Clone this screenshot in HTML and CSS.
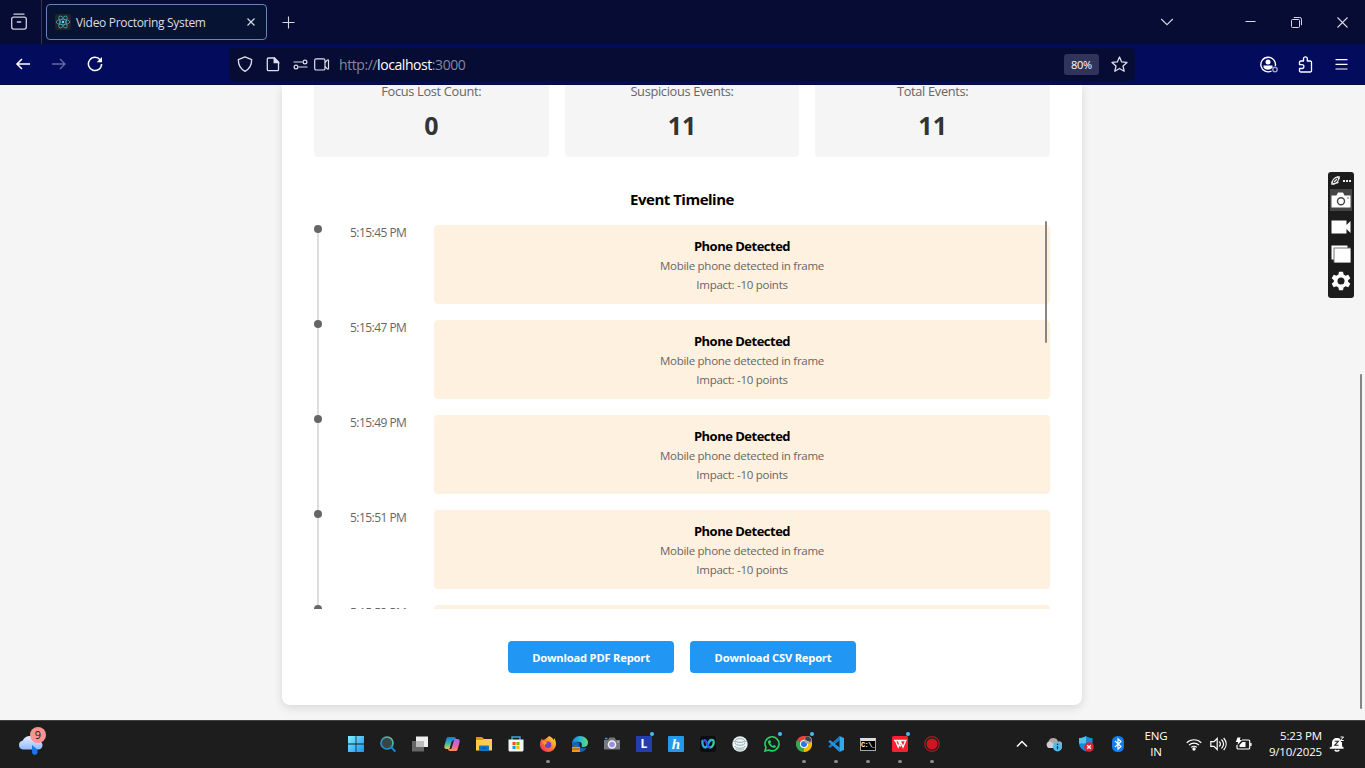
FILE: index.html
```html
<!DOCTYPE html>
<html lang="en">
<head>
<meta charset="utf-8">
<title>Video Proctoring System</title>
<link rel="stylesheet" href="styles.css">
</head>
<body>
<div class="screen">
  <header class="tabbar">
    <div class="tabs-view">
      <svg width="18" height="18" viewBox="0 0 18 18" fill="none" stroke="#cfd0dc" stroke-width="1.3" stroke-linecap="round"><path d="M4 1.2h10"/><rect x="1.7" y="4.1" width="14.6" height="12" rx="2"/><path d="M7.3 9h3.4"/></svg>
    </div>
    <div class="tab">
      <svg class="favicon" width="16" height="16" viewBox="0 0 16 16"><rect width="16" height="16" rx="2" fill="#20232a"/><g fill="none" stroke="#4fa5ba" stroke-width=".8"><ellipse cx="8" cy="8" rx="6.8" ry="2.7"/><ellipse cx="8" cy="8" rx="6.8" ry="2.7" transform="rotate(60 8 8)"/><ellipse cx="8" cy="8" rx="6.8" ry="2.7" transform="rotate(120 8 8)"/></g><circle cx="8" cy="8" r="1.3" fill="#61dafb"/></svg>
      <span class="tab-title">Video Proctoring System</span>
      <svg width="10" height="10" viewBox="0 0 10 10" stroke="#d5d8e0" stroke-width="1.2"><path d="M1.5 1.5l7 7M8.500 1.5l-7 7"/></svg>
    </div>
    <svg class="new-tab" width="13" height="13" viewBox="0 0 13 13" stroke="#d5d6e0" stroke-width="1.1"><path d="M6.500 .5v12M.5 6.500h12"/></svg>
    <div class="window-controls">
      <svg class="tabs-list" width="14" height="8" viewBox="0 0 14 8" fill="none" stroke="#cfd0dc" stroke-width="1.2"><path d="M1.200 1l5.800 5.600L12.800 1"/></svg>
      <svg width="11" height="11" viewBox="0 0 11 11" stroke="#d8d8e2"><path d="M.5 4.500h10"/></svg>
      <svg width="11" height="11" viewBox="0 0 11 11" fill="none" stroke="#d8d8e2"><rect x=".5" y="2.500" width="8" height="8" rx="1"/><path d="M2.800 .5h6a1.700 1.700 0 0 1 1.700 1.700v6"/></svg>
      <svg width="11" height="11" viewBox="0 0 11 11" stroke="#d8d8e2" stroke-width="1.100"><path d="M.5.5l10 10M10.500.5l-10 10"/></svg>
    </div>
  </header>

  <nav class="navbar">
    <div class="nav-buttons">
      <svg width="16" height="16" viewBox="0 0 16 16" fill="none" stroke="#fff" stroke-width="1.500"><path d="M15 8H2M7 3L2 8l5 5"/></svg>
      <svg width="16" height="16" viewBox="0 0 16 16" fill="none" stroke="#666b9c" stroke-width="1.300"><path d="M1 8h13M9 3l5 5-5 5"/></svg>
      <svg width="16" height="16" viewBox="0 0 16 16" fill="none" stroke="#fff" stroke-width="1.500"><path d="M13.300 4A6.600 6.600 0 1 0 14.600 8"/><path d="M15 1v5.300H9.700z" fill="#fff" stroke="none"/></svg>
    </div>
    <div class="urlbar">
      <svg class="i-shield" width="16" height="16" viewBox="0 0 16 16" fill="none" stroke="#dedfe8" stroke-width="1.300" stroke-linejoin="round"><path d="M8 .8L1.300 3.600c0 4.900 2 9.400 6.700 11.700 4.700-2.300 6.700-6.800 6.700-11.700z"/></svg>
      <svg class="i-page" width="14" height="15" viewBox="0 0 14 15" fill="none" stroke="#dedfe8" stroke-width="1.300"><path d="M2.500 1h6L12.500 5v7.500a1.200 1.200 0 0 1-1.200 1.200H2.500a1.200 1.200 0 0 1-1.200-1.200V2.200A1.200 1.200 0 0 1 2.500 1z"/><path d="M8.200 1v4.500h4.300z" fill="#dedfe8"/></svg>
      <svg class="i-perm" width="15" height="11" viewBox="0 0 15 11" fill="none" stroke="#dedfe8" stroke-width="1.200"><path d="M.5 3h9M5.500 8h9"/><circle cx="12" cy="3" r="1.900"/><circle cx="3" cy="8" r="1.900"/></svg>
      <svg class="i-cam" width="16" height="13" viewBox="0 0 16 13" fill="none" stroke="#dedfe8" stroke-width="1.200" stroke-linejoin="round"><rect x=".7" y=".8" width="10.300" height="11.200" rx="1.600"/><path d="M11 4.500l2.200-2.400c.7-.6 1.300-.3 1.300.5v7.800c0 .8-.6 1.100-1.300.5L11 8.500"/></svg>
      <span class="url">http://<b>localhost</b>:3000</span>
      <span class="zoom">80%</span>
      <svg class="i-star" width="17" height="17" viewBox="0 0 17 17" fill="none" stroke="#dedfe8" stroke-width="1.300" stroke-linejoin="round"><path d="M8.500 1l2.200 4.900 5.300.5-4 3.600 1.200 5.200-4.700-2.700-4.700 2.700L5 10 1 6.400l5.300-.5z"/></svg>
    </div>
    <div class="nav-tools">
      <svg width="18" height="17" viewBox="0 0 18 17" fill="none" stroke="#fff" stroke-width="1.400"><path d="M11.500 15A7.300 7.300 0 1 1 15.300 10"/><circle cx="8" cy="6" r="2.500" fill="#fff" stroke="none"/><path d="M3.500 9.500h9v2c-1.200 1.500-2.700 2.200-4.500 2.200s-3.300-.7-4.500-2.200z" fill="#fff" stroke="none"/><circle cx="15" cy="13.500" r="2.200" stroke="#9a9fca"/></svg>
      <svg class="i-ext" width="15" height="17" viewBox="0 0 15 17" fill="none" stroke="#fff" stroke-width="1.300" stroke-linejoin="round"><path d="M5.500 5V2.700a1.900 1.900 0 0 1 3.800 0V5h3a1.200 1.200 0 0 1 1.200 1.200v8.600a1.200 1.200 0 0 1-1.200 1.200H2.700a1.200 1.200 0 0 1-1.200-1.200v-2.300H4a1.900 1.900 0 0 0 0-3.800H1.500V6.200A1.200 1.200 0 0 1 2.700 5z"/></svg>
      <svg width="13" height="11" viewBox="0 0 13 11" stroke="#fff" stroke-width="1.200"><path d="M.5 .6h12M.5 5.300h12M.5 10h12"/></svg>
    </div>
  </nav>

  <main class="page">
    <section class="report">
      <div class="stats">
        <div class="stat"><span class="stat-label">Focus Lost Count:</span><strong>0</strong></div>
        <div class="stat"><span class="stat-label">Suspicious Events:</span><strong>11</strong></div>
        <div class="stat"><span class="stat-label">Total Events:</span><strong>11</strong></div>
      </div>
      <h3 class="heading"><span>Event Timeline</span></h3>
      <div class="timeline-frame">
        <div class="timeline">
          <article class="event"><i class="marker"></i><time>5:15:45 PM</time><div class="event-body"><h4>Phone Detected</h4><p>Mobile phone detected in frame</p><p class="impact">Impact: -10 points</p></div></article>
          <article class="event"><i class="marker"></i><time>5:15:47 PM</time><div class="event-body"><h4>Phone Detected</h4><p>Mobile phone detected in frame</p><p class="impact">Impact: -10 points</p></div></article>
          <article class="event"><i class="marker"></i><time>5:15:49 PM</time><div class="event-body"><h4>Phone Detected</h4><p>Mobile phone detected in frame</p><p class="impact">Impact: -10 points</p></div></article>
          <article class="event"><i class="marker"></i><time>5:15:51 PM</time><div class="event-body"><h4>Phone Detected</h4><p>Mobile phone detected in frame</p><p class="impact">Impact: -10 points</p></div></article>
          <article class="event"><i class="marker"></i><time>5:15:53 PM</time><div class="event-body"></div></article>
        </div>
        <i class="timeline-thumb"></i>
      </div>
      <div class="actions">
        <button class="download">Download PDF Report</button>
        <button class="download">Download CSV Report</button>
      </div>
    </section>
    <i class="page-thumb"></i>
  </main>

  <aside class="recorder">
    <div class="rec-head">
      <svg width="9" height="9" viewBox="0 0 9 9" fill="none" stroke="#eee" stroke-width="1.200"><ellipse cx="4.500" cy="4.500" rx="3.800" ry="2.200" transform="rotate(-45 4.500 4.500)"/><path d="M3 6L6 3M.8 5.500v2.700h2.700M5.500 7.500l2-1.500M6 .8h2.200V3"/></svg>
      <svg width="8" height="2" viewBox="0 0 8 2" fill="#eee"><path d="M0 0h2v2H0zM3 0h2v2H3zM6 0h2v2H6z"/></svg>
    </div>
    <div class="rec-tool active"><svg width="20" height="16" viewBox="0 0 20 16"><path d="M.5 3.500h5L7 .5h5l1.500 3h6V15.500H.5z" fill="#fff"/><circle cx="10" cy="9.200" r="3.500" fill="none" stroke="#444" stroke-width="1.400"/><circle cx="17" cy="6" r=".7" fill="#444"/></svg></div>
    <div class="rec-tool"><svg width="20" height="14" viewBox="0 0 20 14" fill="#fff"><path d="M.5 .5h15v4.500L19.500 1v12L15.500 9v4.500H.5z"/></svg></div>
    <div class="rec-tool"><svg width="20" height="18" viewBox="0 0 20 18"><path d="M.5 .5h16v14H.5z" fill="#fff"/><path d="M2.500 2.500H19.500v15H2.500z" fill="#777"/><path d="M3.500 3.500H19.500v14H3.500z" fill="#fff"/></svg></div>
    <div class="rec-tool"><svg width="20" height="20" viewBox="0 0 20 20"><path d="M8 .8h4l.6 2.800 2 1.200 2.700-1 2 3.500-2.200 1.900v1.600l2.200 1.900-2 3.500-2.700-1-2 1.200-.6 2.800H8l-.6-2.800-2-1.200-2.700 1-2-3.500 2.200-1.900V9.200L.7 7.300l2-3.500 2.700 1 2-1.200z" fill="#fff"/><circle cx="10" cy="10" r="3.500" fill="#1e1e1e"/></svg></div>
  </aside>

  <footer class="taskbar">
    <div class="weather">
      <svg width="26" height="21" viewBox="0 0 26 21"><defs><linearGradient id="cloud" x2="0" y2="1"><stop stop-color="#e7f0ff"/><stop offset="1" stop-color="#91b9fa"/></linearGradient></defs><path d="M5 14.500a4.400 4.400 0 0 1-.4-8.700C6 2.500 8.500 1 12 1c4 0 6 2 7 4.500 3 0 5.500 2 5.500 4.500 0 3-2 4.500-4.500 4.500z" fill="url(#cloud)"/><path d="M14 10l5.500 4.800v2.700c-.5 3.300-5 3.300-5.400 0z" fill="#1976ea"/></svg>
      <span class="badge">9</span>
    </div>
    <div class="apps">
      <div class="app"><svg viewBox="0 0 16 16"><defs><linearGradient id="win" x2="1" y2="1"><stop stop-color="#84ecff"/><stop offset="1" stop-color="#1396f3"/></linearGradient></defs><path d="M0 0h7.600v7.600H0zM8.400 0H16v7.600H8.400zM0 8.400h7.600V16H0zM8.400 8.400H16V16H8.400z" fill="url(#win)"/></svg></div>
      <div class="app"><svg viewBox="0 0 16 16"><defs><linearGradient id="find" x1="1" x2="0" y2="1"><stop stop-color="#65d4a2"/><stop offset=".5" stop-color="#3a9fa4"/><stop offset="1" stop-color="#1682e6"/></linearGradient></defs><circle cx="7" cy="7" r="6" fill="#3d4448" stroke="url(#find)" stroke-width="1.700"/><path d="M11.500 11.500l3.300 3.500" stroke="#1684e6" stroke-width="1.900" stroke-linecap="round"/></svg></div>
      <div class="app"><svg viewBox="0 0 16 16"><path d="M0 5h12v10.500H0z" fill="#666"/><path d="M4 .5h12v10.500H4z" fill="#eee"/><path d="M4 5h8v6H4z" fill="#bbb"/></svg></div>
      <div class="app"><svg viewBox="0 0 16 16"><defs><linearGradient id="copa" x2="0" y2="1"><stop stop-color="#2176dc"/><stop offset=".5" stop-color="#29b8aa"/><stop offset="1" stop-color="#f0c83f"/></linearGradient><linearGradient id="copb" x2="0" y2="1"><stop stop-color="#a56bf0"/><stop offset=".6" stop-color="#ed63a3"/><stop offset="1" stop-color="#ff8f5d"/></linearGradient></defs><path d="M4.500 1h5.500c1.300 0 1.700.8 2 2l.2 1H10c-1 0-1.500.5-1.800 1.500L6.300 11c-.4 1.500-1 2-2.300 2H2.500C.8 13 0 12 .4 10L2.300 3C2.700 1.500 3.200 1 4.500 1z" fill="url(#copa)"/><path d="M11.500 15H6c-1.300 0-1.700-.8-2-2H6c1 0 1.500-.5 1.800-1.500L9.700 5c.4-1.500 1-2 2.300-2h1.500C15.200 3 16 4 15.600 6l-1.900 7c-.4 1.500-.9 2-2.200 2z" fill="url(#copb)"/><path d="M8.300 5.500L6.500 12" stroke="#1d2a36" stroke-width="1.200"/></svg></div>
      <div class="app"><svg viewBox="0 0 16 16"><path d="M0 1h6l2 2h7v5H0z" fill="#d99a09"/><path d="M0 4h6l2-1h8v11.500H0z" fill="#ffcc4c"/><path d="M3 15V10.500C3 9.700 3.500 9.500 4 9.500h8c.6 0 1 .4 1 1V15z" fill="#1274c6"/><path d="M5.500 12h5" stroke="#0a4c91"/></svg></div>
      <div class="app"><svg viewBox="0 0 16 16"><path d="M4 4V1h8v3" fill="none" stroke="#38a9df" stroke-width="1.400"/><path d="M.5 3.500h15V14a1.500 1.500 0 0 1-1.500 1.500H2A1.500 1.500 0 0 1 .5 14z" fill="#f5f5f5"/><path d="M4.500 6H7.600v3.100H4.500z" fill="#f25022"/><path d="M8.400 6h3.100v3.100H8.400z" fill="#7fba00"/><path d="M4.500 9.900h3.100V13H4.500z" fill="#00a4ef"/><path d="M8.400 9.900h3.100V13H8.400z" fill="#ffb900"/></svg></div>
      <div class="app running"><svg viewBox="0 0 16 16"><defs><linearGradient id="fox" x1="1" x2="0" y2="1"><stop stop-color="#fff04c"/><stop offset=".5" stop-color="#ff7b25"/><stop offset="1" stop-color="#f0207c"/></linearGradient></defs><path d="M9 0c3 1 4 3 4.500 4 .8-.5.5-2 .2-2.500C15.500 4 16 6 16 8.500 15.500 13 12 16 8 16S0 13 0 8.500c0-2.500.8-4.500 2-6l.7 1.800C3.500 3.500 4 3.500 5 3.600 6 1.500 8 2 9 0z" fill="url(#fox)"/><circle cx="8" cy="8.700" r="3.300" fill="#7640cf"/><path d="M3 5c2 0 3 .7 4.500 2C6 7.500 5 8 5.200 9.500 3.500 8.700 3 7 3 5z" fill="#ff9b24"/></svg></div>
      <div class="app"><svg viewBox="0 0 16 16"><defs><linearGradient id="edge" x2="1"><stop stop-color="#1683d7"/><stop offset=".5" stop-color="#29b7d8"/><stop offset="1" stop-color="#68de72"/></linearGradient></defs><path d="M0 8C0 3 4 0 8 0c4.500 0 8 3 8 6.500C16 9.500 14 11 11.500 11 9 11 9.300 9.500 10 8.300 9.500 6 7.500 5.400 5 5.700 2.500 6 1 7 0 8z" fill="url(#edge)"/><path d="M0 8c1.500-2.500 6-2.500 8-.5C6 9 8 13.500 14.500 12 13 14.500 11 16 8 16 4 16 0 13 0 8z" fill="#1464b4"/><path d="M0 11h8v5H0z" fill="#e99b23"/><path d="M0 13h8M2.500 11V9.700h3V11" fill="none" stroke="#9b5710"/></svg></div>
      <div class="app"><svg viewBox="0 0 16 16"><path d="M0 4h4l1.500-2.500h5L12 4h4v9.500H0z" fill="#74797f"/><path d="M1 1.800h2.500v1.500H1z" fill="#38a8dc"/><circle cx="8" cy="8.500" r="4.300" fill="#f1f1f5"/><circle cx="8" cy="8.500" r="2.800" fill="#9a8de5"/><path d="M13 5h2v1.500h-2z" fill="#aaa"/></svg></div>
      <div class="app notify"><span class="tile tile-l">L</span></div>
      <div class="app"><span class="tile tile-h">h</span></div>
      <div class="app"><svg viewBox="0 0 16 16"><rect width="16" height="16" rx="3" fill="#0d0d10"/><g fill="none" stroke-width="2.300" stroke-linecap="round"><path d="M10 4.800C11 3.500 13.500 3.300 13.700 5.500c.2 2.500-1.200 6-3.700 6-1.200 0-2-1-2.500-2.500" stroke="#35c99b"/><path d="M2.500 5c-.5 3 .7 6.500 2.800 6.500C8 11.500 8.500 4 11 4" stroke="#28a9e9"/><path d="M4.300 4.300C6.500 3.500 7 10.500 9.500 11.300" stroke="#3159ef"/></g></svg></div>
      <div class="app"><svg viewBox="0 0 16 16"><circle cx="8" cy="8" r="7.700" fill="#edf4f4"/><g fill="none" stroke="#8fa4ad" stroke-width=".9"><ellipse cx="8" cy="4.500" rx="4.500" ry="1.900"/><path d="M3 7c0 3 10 3 10 0M3 10c0 3 10 3 10 0M4 12.500c0 2 8 2 8 0M1 5l3 1M12 6l3-1"/></g></svg></div>
      <div class="app notify"><svg viewBox="0 0 16 16" fill="none"><path d="M1 15l1-3.600A7 7 0 1 1 4.700 14z" stroke="#25d366" stroke-width="1.600"/><path d="M5 4.200l1.300.1.800 2-.9 1c.7 1.300 1.500 2.100 2.700 2.700l1-1 2 .9c.1 1.200-.8 1.900-1.900 1.900C7 11.500 4.300 8.700 4 6c0-.8.4-1.400 1-1.800z" fill="#25d366"/></svg></div>
      <div class="app running notify"><svg viewBox="0 0 16 16"><path d="M8 8L1 4A8 8 0 0 1 15 4z" fill="#e94235"/><path d="M8 8V16A8 8 0 0 1 1 4z" fill="#34a853"/><path d="M8 8l7-4A8 8 0 0 1 8 16z" fill="#fbbc04"/><circle cx="8" cy="8" r="4" fill="#fff"/><circle cx="8" cy="8" r="3" fill="#2977e8"/><circle cx="12" cy="4" r="3.800" fill="#aaa"/><path d="M9 3c0-4 6-3 6 1l-1 3c0-3-3-1-5-4z" fill="#424346"/></svg></div>
      <div class="app running"><svg viewBox="0 0 16 16"><path d="M11.500 0v4.500L2 12 .3 10.500z" fill="#167ac6"/><path d="M11.500 16v-4.500L2 4 .3 5.500z" fill="#2493df"/><path d="M11.500 0L16 2v12l-4.500 2z" fill="#30a9ed"/></svg></div>
      <div class="app running"><span class="terminal">C:\_</span></div>
      <div class="app running notify"><svg viewBox="0 0 16 16"><rect width="16" height="16" rx="1.500" fill="#fa1f31"/><path d="M2 4.500h11.800L11 11 8.500 5.500 6.200 11 3.500 4.800M6.500 5l2.200 5.500" fill="none" stroke="#fff" stroke-width="1.400"/></svg></div>
      <div class="app running"><svg viewBox="0 0 16 16"><circle cx="8" cy="8" r="7.300" fill="none" stroke="#a51e24" stroke-width="1.200"/><circle cx="8" cy="8" r="5.500" fill="#cc1720"/></svg></div>
    </div>
    <div class="tray">
      <svg class="tray-up" width="12" height="8" viewBox="0 0 12 8" fill="none" stroke="#fff" stroke-width="1.500"><path d="M1 6.500l5-5 5 5"/></svg>
      <svg width="16" height="16" viewBox="0 0 16 16"><path d="M3 12a3.500 3.500 0 0 1-.5-6.500A5 5 0 0 1 12 5.500 3 3 0 0 1 14 12z" fill="#aaa"/><path d="M3 12a3.500 3.500 0 0 1 .3-6.500C6 5.500 8 8 10 12z" fill="#d0d0d0"/><circle cx="11.500" cy="10.800" r="4.600" fill="#51bae9"/><path d="M11.500 10V13.300M11.500 7.800v1.300" stroke="#083a58" stroke-width="1.300"/></svg>
      <svg width="16" height="16" viewBox="0 0 16 16"><path d="M8 0c2 1.500 4 2 6.500 2v5C14.500 11 12 14 8 15.500 4 14 1 11 1 7V2c3 0 5-.5 7-2z" fill="#168ad8"/><path d="M8 0v7.500H1V2c3 0 5-.5 7-2z" fill="#50c4ed"/><circle cx="11" cy="11" r="4.800" fill="#dc2632"/><path d="M9.200 9.200l3.600 3.600M12.800 9.200l-3.600 3.600" stroke="#fff" stroke-width="1.300"/></svg>
      <svg width="16" height="16" viewBox="0 0 16 16"><rect x="2" width="12" height="16" rx="5.500" fill="#087ff4"/><path d="M5 5l6 5.500-3 2.700V2.800L11 5.500 5 11" fill="none" stroke="#fff" stroke-width="1.200"/></svg>
      <div class="language"><span>ENG</span><span>IN</span></div>
      <div class="status">
        <svg width="16" height="13" viewBox="0 0 16 13" fill="none" stroke="#fff" stroke-width="1.200"><path d="M.7 4.800a10.300 10.300 0 0 1 14.600 0M3 7.200a7 7 0 0 1 10 0M5.200 9.400a4 4 0 0 1 5.600 0"/><circle cx="8" cy="11" r="1.100" fill="#fff"/></svg>
        <svg width="17" height="14" viewBox="0 0 17 14" fill="none" stroke="#fff" stroke-width="1.200"><path d="M.8 4.700H4L7.200 1.500v11L4 9.300H.8zM9.300 4.500c1.300 1.500 1.300 3.500 0 5M11.500 2.500c2.500 2.700 2.500 6.300 0 9M13.700 1c3.200 3.600 3.200 8.400 0 12"/></svg>
        <svg width="17" height="14" viewBox="0 0 17 14" fill="none" stroke="#fff" stroke-width="1.200"><path d="M7 3h6.500a1.200 1.200 0 0 1 1.200 1.200v6.600a1.200 1.200 0 0 1-1.200 1.200H3.200A1.200 1.200 0 0 1 2 10.800V8M16 6v3"/><path d="M7.500 5h3v5h-6V8z" fill="#fff" stroke="none"/><path d="M2.500.5h3L4.800 3H7L2.500 8l.7-3H.8z" fill="#fff" stroke="none"/></svg>
      </div>
      <div class="clock"><span>5:23 PM</span><span>9/10/2025</span></div>
      <svg width="16" height="16" viewBox="0 0 16 16"><path d="M2 12c1-1.500 1-2.500 1-5 0-3 2-5 5-5s5 2 5 5 0 3.500 1.500 5z" fill="#fff"/><path d="M.8 12h13.700M5.700 14c1 1.300 3.600 1.300 4.600 0" fill="none" stroke="#fff" stroke-width="1.400"/><path d="M10.500 0H16v6h-4z" fill="#1d1d1d"/><path d="M5.700 5.300h3.600l-3.600 4h3.800" fill="none" stroke="#222" stroke-width="1.100"/><path d="M11.500 1H14.500l-3 3.500h3.200" fill="none" stroke="#fff"/></svg>
    </div>
  </footer>
</div>
</body>
</html>
```

FILE: styles.css
```css
* { box-sizing: border-box; }
body { margin: 0; font-family: "Open Sans", "Noto Sans", sans-serif; }
svg { display: block; flex: none; }
.screen { position: relative; width: 1365px; height: 768px; display: flex; flex-direction: column; overflow: hidden; }

.tabbar { height: 44px; flex: none; background: #070c34; display: flex; align-items: center; }
.tabs-view { width: 42px; height: 44px; padding: 0 0 0 10px; display: flex; align-items: center; border-right: 1px solid #34384f; }
.tab { width: 221px; height: 36px; margin-left: 4px; padding: 0 10px 0 8px; display: flex; align-items: center; border: 1px solid #6684bd; border-radius: 4px; background: #061332; }
.favicon { margin-right: 5px; }
.tab-title { flex: 1; color: #dadde5; font-size: 12px; letter-spacing: -.3px; white-space: nowrap; }
.new-tab { margin-left: 15px; }
.window-controls { margin-left: auto; padding-right: 17px; display: flex; align-items: center; gap: 35px; }
.tabs-list { margin-right: 36px; }

.navbar { height: 41px; flex: none; display: flex; align-items: center; background: #030b5c; border-bottom: 1px solid #070c34; }
.nav-buttons { width: 229px; padding-left: 15px; display: flex; gap: 20px; }
.urlbar { width: 906px; height: 33px; padding: 0 7px 0 8px; display: flex; align-items: center; border-radius: 5px; background: #070c34; }
.i-page { margin-left: 13px; }
.i-perm { margin-left: 13px; }
.i-cam { margin-left: 6px; }
.url { flex: 1; margin-left: 9px; color: #85889e; font-size: 14px; letter-spacing: -.43px; white-space: nowrap; }
.url b { color: #fff; font-weight: 400; }
.zoom { width: 35px; height: 21px; border-radius: 3px; background: #30345a; color: #fff; font-size: 11px; line-height: 21px; text-align: center; letter-spacing: -.3px; }
.i-star { margin: 0 0 0 12px; }
.nav-tools { margin-left: auto; padding-right: 17px; display: flex; align-items: center; gap: 20px; }
.i-ext { margin-right: 2px; }

.page { position: relative; height: 635px; flex: none; overflow: hidden; background: #f5f5f5; }
.report { width: 800px; height: 620px; margin-left: 282px; padding: 0 32px 32px; display: flex; flex-direction: column; border-radius: 0 0 8px 8px; background: #fff; box-shadow: 0 3px 10px rgba(0,0,0,.12); }
.stats { height: 72px; flex: none; display: grid; grid-template-columns: repeat(3, 1fr); gap: 16px; }
.stat { display: flex; flex-direction: column; align-items: center; background: #f5f5f5; border-radius: 0 0 4px 4px; }
.stat-label { height: 13px; color: #666; font-size: 12.8px; line-height: 13px; letter-spacing: -.32px; }
.stat strong { margin-top: 9px; color: #333; font-size: 25px; line-height: 36px; }
.heading { margin: 31px 0 10px; font-size: 15px; font-weight: 700; line-height: 23px; text-align: center; letter-spacing: -.5px; }
.timeline-frame { position: relative; height: 388px; flex: none; }
.timeline { height: 388px; padding-top: 4px; overflow: hidden; background: linear-gradient(#ddd, #ddd) 3px 8px / 2px 100% no-repeat; }
.event { height: 79px; margin-bottom: 16px; display: flex; align-items: flex-start; }
.marker { width: 8px; height: 8px; flex: none; border-radius: 50%; background: #666; }
.event time { width: 84px; margin-left: 28px; color: #666; font-size: 12px; line-height: 16px; letter-spacing: -.54px; white-space: nowrap; }
.event-body { flex: 1; height: 79px; padding-top: 12px; border-radius: 4px; background: #fff1df; text-align: center; }
.event h4 { margin: 0; font-size: 13px; line-height: 19px; letter-spacing: -.5px; }
.event p { margin: 0; color: #666; font-size: 11.5px; line-height: 20px; letter-spacing: -.27px; }
.event .impact { line-height: 18px; }
.timeline-thumb { position: absolute; right: 3px; top: 0; width: 2px; height: 122px; border-radius: 1px; background: #898580; }
.page-thumb { position: absolute; right: 3px; top: 289px; width: 2px; height: 335px; border-radius: 1px; background: #858585; }
.actions { margin-top: 32px; display: flex; justify-content: center; gap: 16px; }
.download { width: 166px; height: 32px; padding: 0; border: 0; border-radius: 4px; background: #2196f3; color: #fff; font: 700 11.2px "Open Sans", "Noto Sans", sans-serif; line-height: 33px; letter-spacing: -.2px; }

.recorder { position: absolute; left: 1328px; top: 172px; width: 26px; height: 126px; padding: 3px 2px; border-radius: 3px; background: #1c1c1c; display: flex; flex-direction: column; }
.rec-head { height: 11px; margin-bottom: 3px; padding: 0 1px; display: flex; align-items: center; justify-content: space-between; }
.rec-tool { height: 27px; display: flex; align-items: center; justify-content: center; }
.rec-tool.active { height: 22px; margin-bottom: 2px; background: #454545; }

.taskbar { height: 48px; flex: none; display: flex; background: #1d1d1d; border-top: 1px solid #414141; color: #fff; }
.weather { position: relative; width: 348px; padding: 14px 0 0 18px; }
.badge { position: absolute; left: 30px; top: 6px; width: 16px; height: 16px; border-radius: 50%; background: #ff9293; color: #151515; font-size: 11px; line-height: 16px; text-align: center; }
.apps { height: 46px; display: flex; align-items: center; gap: 16px; }
.app { position: relative; width: 16px; height: 16px; }
.app svg { width: 16px; height: 16px; }
.running::after { content: ""; position: absolute; left: 6px; bottom: -11px; width: 4px; height: 3px; border-radius: 2px; background: #8b8b8b; }
.notify::before { content: ""; position: absolute; left: 14px; top: -4px; width: 4px; height: 4px; border-radius: 50%; background: #4cbcf0; }
.tile { display: block; width: 16px; height: 16px; font-size: 12px; line-height: 16px; text-align: center; font-weight: 700; }
.tile-l { background: #233fae; }
.tile-h { background: #219aed; border-radius: 1px; font: italic 700 15px/16px "Liberation Serif", serif; }
.terminal { display: block; width: 16px; height: 13px; margin-top: 2px; border: 1px solid #aaa; border-top: 3px solid #ddd; background: #000; font: 700 7px/9px "Liberation Mono", monospace; letter-spacing: -.6px; overflow: hidden; }
.app:has(.terminal) { display: flex; align-items: flex-start; }
.tray { margin-left: auto; padding: 0 20px 0 0; height: 46px; display: flex; align-items: center; gap: 16px; }
.tray-up { margin-right: 2px; }
.language, .clock { display: flex; flex-direction: column; font-size: 11.5px; line-height: 16px; letter-spacing: -.15px; white-space: nowrap; }
.language { width: 28px; text-align: center; }
.status { display: flex; align-items: center; gap: 8px; }
.clock { width: 57px; margin: 0 -9px 0 -3px; text-align: right; align-items: flex-end; }
```
